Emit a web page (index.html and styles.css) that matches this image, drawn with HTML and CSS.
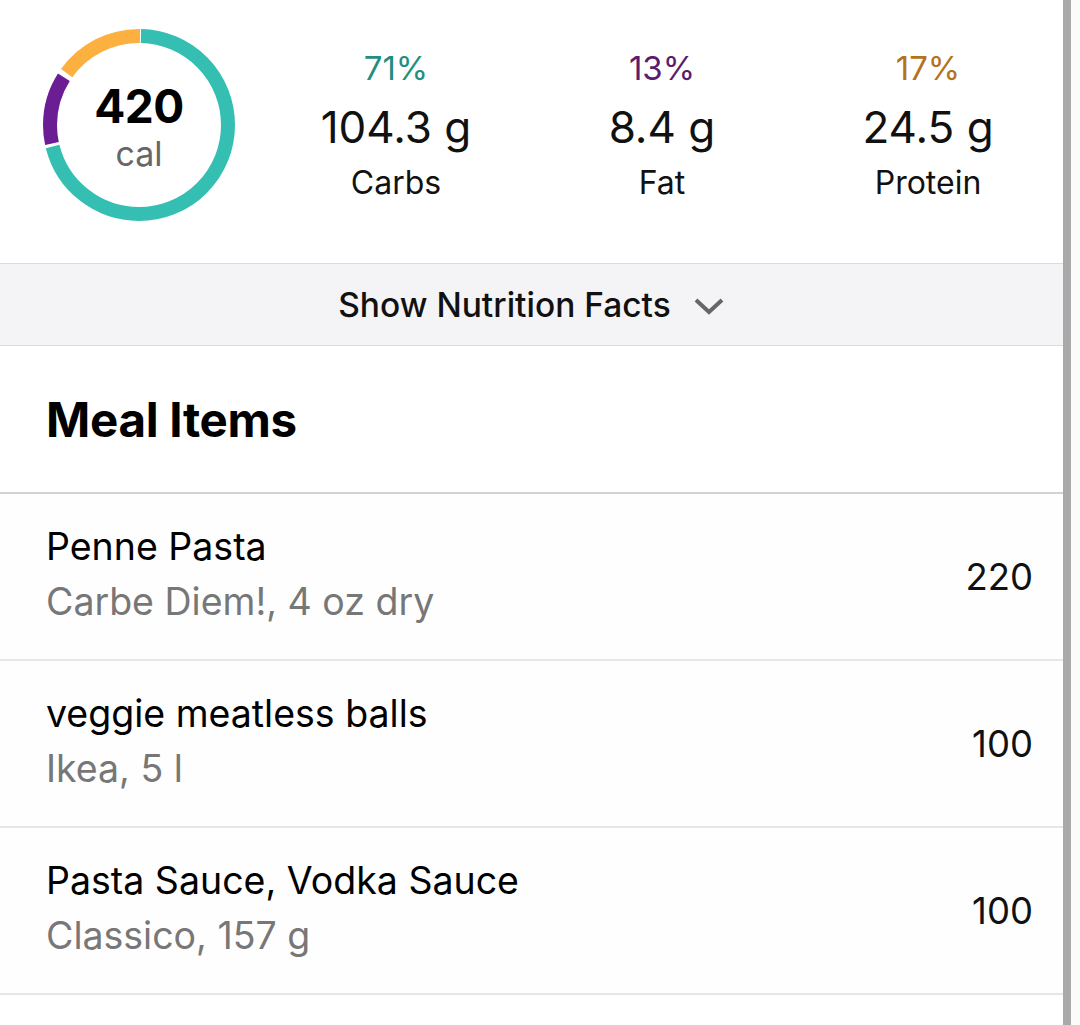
FILE: index.html
```html
<!DOCTYPE html>
<html lang="en">
<head>
<meta charset="utf-8">
<title>Meal</title>
<link rel="stylesheet" href="styles.css">
</head>
<body>
<div class="screen">
  <main class="content">
    <section class="summary">
      <div class="ring">
        <svg class="ring-svg" width="192" height="192" viewBox="0 0 192 192">
          <g transform="rotate(-90 96 96)">
            <circle cx="96" cy="96" r="89" fill="none" stroke="#35bfb2" stroke-width="14" stroke-dasharray="395 165" stroke-dashoffset="-2"/>
            <circle cx="96" cy="96" r="89" fill="none" stroke="#6b1d94" stroke-width="14" stroke-dasharray="69 491" stroke-dashoffset="-400"/>
            <circle cx="96" cy="96" r="89" fill="none" stroke="#fbb040" stroke-width="14" stroke-dasharray="87 473" stroke-dashoffset="-474"/>
          </g>
        </svg>
        <div class="ring-text">
          <div class="kcal">420</div>
          <div class="unit">cal</div>
        </div>
      </div>
      <div class="macro">
        <div class="pct pct-carbs">71%</div>
        <div class="grams">104.3 g</div>
        <div class="label">Carbs</div>
      </div>
      <div class="macro">
        <div class="pct pct-fat">13%</div>
        <div class="grams">8.4 g</div>
        <div class="label">Fat</div>
      </div>
      <div class="macro">
        <div class="pct pct-protein">17%</div>
        <div class="grams">24.5 g</div>
        <div class="label">Protein</div>
      </div>
    </section>

    <div class="facts-toggle">
      <span>Show Nutrition Facts</span>
      <svg class="chevron" width="32" height="20" viewBox="0 0 32 20">
        <path d="M3 4 L16 16 L29 4" fill="none" stroke="#666" stroke-width="4" stroke-linecap="butt" stroke-linejoin="miter"/>
      </svg>
    </div>

    <h2 class="section-title">Meal Items</h2>

    <ul class="items">
      <li class="item">
        <div class="item-text">
          <div class="item-name">Penne Pasta</div>
          <div class="item-sub">Carbe Diem!, 4 oz dry</div>
        </div>
        <div class="item-cal">220</div>
      </li>
      <li class="item">
        <div class="item-text">
          <div class="item-name">veggie meatless balls</div>
          <div class="item-sub">Ikea, 5 l</div>
        </div>
        <div class="item-cal">100</div>
      </li>
      <li class="item">
        <div class="item-text">
          <div class="item-name">Pasta Sauce, Vodka Sauce</div>
          <div class="item-sub">Classico, 157 g</div>
        </div>
        <div class="item-cal">100</div>
      </li>
    </ul>
  </main>
  <div class="edge-bar"></div>
  <div class="edge-space"></div>
</div>
</body>
</html>
```

FILE: styles.css
```css
* { box-sizing: border-box; }
html, body {
  margin: 0;
  padding: 0;
  background: #fff;
  font-family: Inter, "Noto Sans", "Liberation Sans", sans-serif;
  color: #000;
}
.screen {
  display: flex;
  width: 1080px;
  min-height: 1025px;
}
.content {
  width: 1063px;
  flex: none;
}
.edge-bar {
  width: 8px;
  flex: none;
  background: #a9a9a9;
}
.edge-space {
  flex: 1;
  background: #fbfbfb;
}

/* summary */
.summary {
  display: grid;
  grid-template-columns: 220px 266px 266px 266px;
  padding: 29px 0 0 43px;
  height: 263px;
}
.ring {
  position: relative;
  width: 192px;
  height: 192px;
}
.ring-svg { display: block; }
.ring-text {
  position: absolute;
  inset: 0;
  display: flex;
  flex-direction: column;
  align-items: center;
  padding-top: 53px;
}
.kcal {
  font-size: 46px;
  font-weight: 700;
  line-height: 48px;
  letter-spacing: -0.5px;
}
.unit {
  font-size: 34px;
  line-height: 48px;
  color: #676767;
}
.macro {
  display: flex;
  flex-direction: column;
  align-items: center;
  padding-top: 19px;
}
.pct {
  font-size: 33px;
  line-height: 40px;
}
.pct-carbs { color: #1f8f81; }
.pct-fat { color: #5a1d6e; }
.pct-protein { color: #b5721c; }
.grams {
  font-size: 44px;
  line-height: 52px;
  margin-top: 13px;
  color: #111;
}
.label {
  font-size: 32px;
  line-height: 40px;
  margin-top: 10px;
  color: #111;
}

/* toggle */
.facts-toggle {
  height: 83px;
  background: #f4f4f6;
  border-top: 1px solid #dcdcdc;
  border-bottom: 1px solid #dcdcdc;
  display: flex;
  align-items: center;
  justify-content: center;
  gap: 22px;
  padding-left: 0;
  font-size: 33.5px;
  font-weight: 500;
  color: #111;
}
.chevron { display: block; margin-top: 2px; }

/* section */
.section-title {
  margin: 0;
  height: 148px;
  display: flex;
  align-items: center;
  padding-left: 46px;
  font-size: 47.5px;
  font-weight: 700;
  letter-spacing: -0.3px;
  border-bottom: 2px solid #d2d2d2;
}

.items {
  list-style: none;
  margin: 0;
  padding: 0;
}
.item {
  display: flex;
  align-items: center;
  justify-content: space-between;
  height: 167px;
  padding: 0 30px 6px 46px;
  border-bottom: 2px solid #e6e6e6;
  background: #fefefe;
}
.item-name {
  font-size: 37.5px;
  line-height: 55px;
  color: #000;
}
.item-sub {
  font-size: 37.5px;
  line-height: 55px;
  color: #777;
}
.item-cal {
  font-size: 36.5px;
  color: #111;
  margin-top: 6px;
}
```
